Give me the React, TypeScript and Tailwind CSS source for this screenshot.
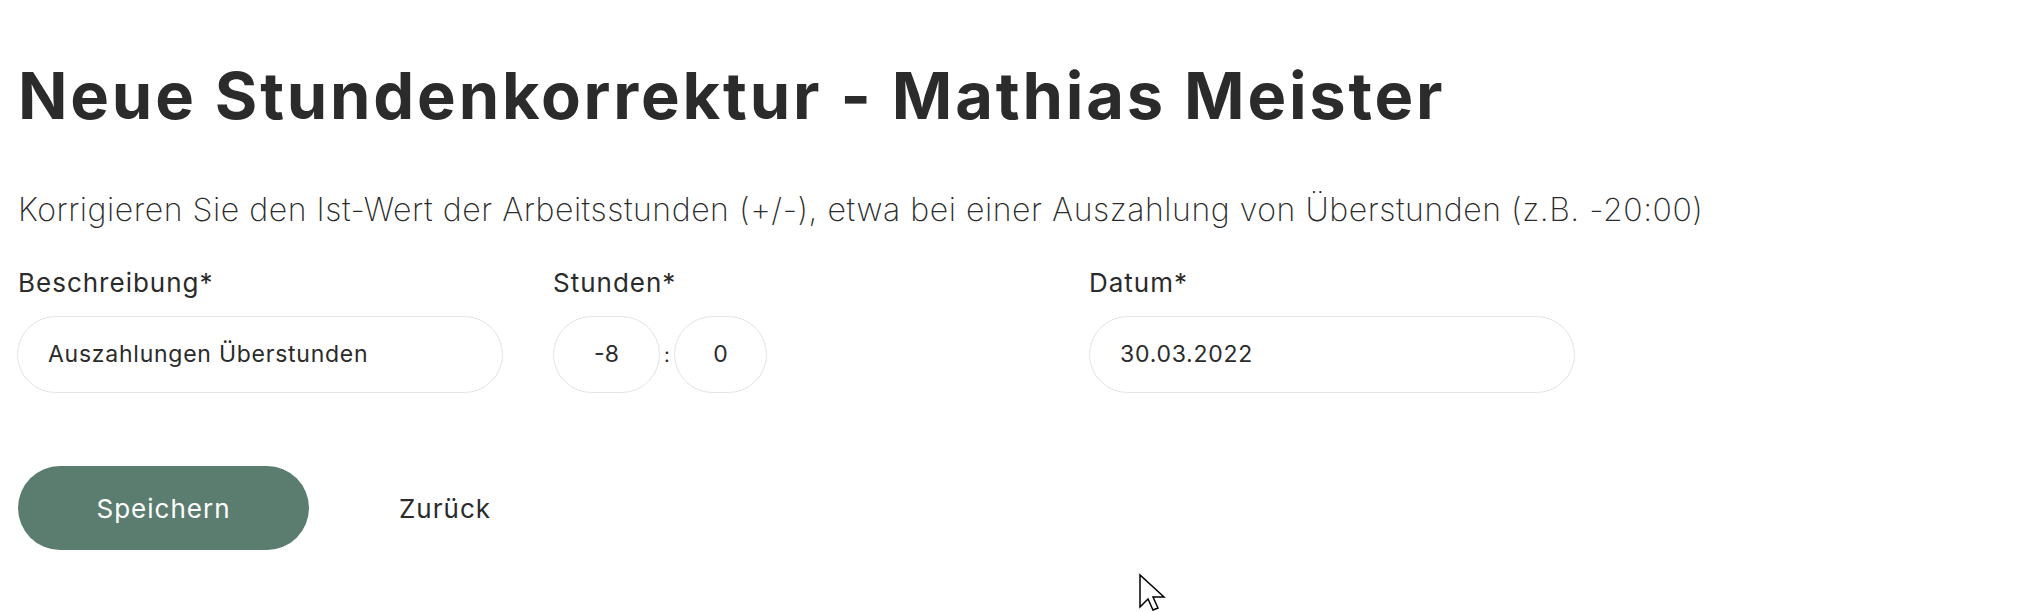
export default function App() {
    return (
        <div className="relative min-h-[612px] bg-white pl-[18px] pt-[63px] text-[#2b2b2b] font-['Inter',sans-serif]">
            <h1 className="text-[65px] leading-none font-bold tracking-[2.8px]">
                Neue Stundenkorrektur - Mathias Meister
            </h1>

            <p className="mt-[66px] text-[32px] leading-none font-extralight tracking-[0.55px] text-[#2b2b2b]">
                Korrigieren Sie den Ist-Wert der Arbeitsstunden (+/-), etwa bei einer Auszahlung von Überstunden (z.B. -20:00)
            </p>

            <div className="mt-[44px] grid grid-cols-[536px_536px_486px] -ml-[1px]">
                <div className="flex flex-col gap-[20px]">
                    <label className="pl-[1px] text-[26px] leading-none tracking-[1px]">Beschreibung*</label>
                    <div className="flex h-[77px] w-[486px] items-center rounded-full border border-[#e3e3e3] pl-[30px] text-[23px] tracking-[0.75px]">
                        Auszahlungen Überstunden
                    </div>
                </div>

                <div className="flex flex-col gap-[20px]">
                    <label className="text-[26px] leading-none tracking-[1px]">Stunden*</label>
                    <div className="flex items-center">
                        <div className="flex h-[77px] w-[107px] items-center justify-center rounded-full border border-[#e3e3e3] text-[23px]">-8</div>
                        <span className="w-[14px] text-center text-[20px]">:</span>
                        <div className="flex h-[77px] w-[93px] items-center justify-center rounded-full border border-[#e3e3e3] text-[23px]">0</div>
                    </div>
                </div>

                <div className="flex flex-col gap-[20px]">
                    <label className="text-[26px] leading-none tracking-[1px]">Datum*</label>
                    <div className="flex h-[77px] w-[486px] items-center rounded-full border border-[#e3e3e3] pl-[30px] text-[23px] tracking-[0.75px]">
                        30.03.2022
                    </div>
                </div>
            </div>

            <div className="mt-[73px] flex items-center">
                <button className="h-[84px] w-[291px] rounded-full bg-[#5a7d70] text-[26px] tracking-[1px] text-white">
                    Speichern
                </button>
                <button className="ml-[90px] text-[26px] tracking-[1px]">Zurück</button>
            </div>

            {/* mouse cursor */}
            <svg className="absolute left-[1138px] top-[573px]" width="28" height="40" viewBox="0 0 28 40">
                <path d="M2 2 L2 34 L10 26 L15 37 L20 35 L15 24 L26 24 Z" fill="white" stroke="black" strokeWidth="1.5" strokeLinejoin="miter" />
            </svg>
        </div>
    )
}
